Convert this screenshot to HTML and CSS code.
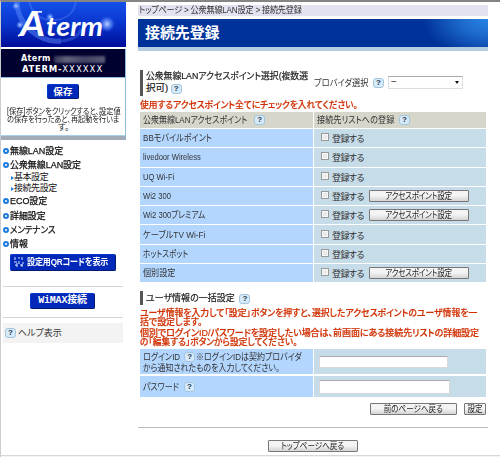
FILE: index.html
```
<!DOCTYPE html>
<html lang="ja">
<head>
<meta charset="utf-8">
<title>接続先登録</title>
<link rel="stylesheet" href="styles.css">
</head>
<body>
<div class="page">
  <aside class="side">
    <svg class="logo" viewBox="0 0 125 45">
      <defs>
        <linearGradient id="sky" x1="0" y1="0" x2="0" y2="1"><stop offset="0" stop-color="#1450ea"/><stop offset=".5" stop-color="#0834cc"/><stop offset="1" stop-color="#000c98"/></linearGradient>
        <radialGradient id="glow"><stop offset="0" stop-color="#b9d0ff"/><stop offset=".45" stop-color="#739bff" stop-opacity=".75"/><stop offset="1" stop-color="#5080ff" stop-opacity="0"/></radialGradient>
      </defs>
      <rect width="125" height="45" fill="url(#sky)"/>
      <g fill="none" stroke="#6794ff">
        <path d="M16-3C15 22 38 41 60 39" stroke-width="5" opacity=".45"/>
        <path d="M60 39C70 38 78 34 80 27" stroke-width="3" opacity=".3"/>
        <path d="M28-2C30 12 40 19 54 18S74 8 75-2" stroke-width="2" opacity=".3"/>
      </g>
      <circle cx="15" cy="4" r="4" fill="url(#glow)"/>
      <circle cx="19" cy="23" r="4" fill="url(#glow)"/>
      <circle cx="49" cy="15" r="4" fill="url(#glow)"/>
      <circle cx="106" cy="22" r="8" fill="url(#glow)"/>
      <g fill="#fff" class="logo-text">
        <text x="19" y="34" font-size="34" textLength="25" lengthAdjust="spacingAndGlyphs">A</text>
        <text x="45" y="34" font-size="26" textLength="57" lengthAdjust="spacingAndGlyphs">term</text>
      </g>
      <path d="M17 34L23 31M30 13Q35 9 41 10" fill="none" stroke="#fff" stroke-width="1.500"/>
    </svg>
    <div class="model">
      <div class="model-row"><span>Aterm</span><i class="masked"></i></div>
      <div class="model-id">ATERM-<b>XXXXXX</b></div>
    </div>
    <div class="save">
      <button class="blue save-btn">保存</button>
      <p class="note"><span class="n1">[保存]ボタンをクリックすると、設定値</span><span class="n2">の保存を行ったあと、再起動を行いま</span><span class="n3">す。</span></p>
    </div>
    <nav class="nav">
      <a class="main"><span>無線LAN設定</span></a>
      <a class="main"><span>公衆無線LAN設定</span></a>
      <a class="sub">基本設定</a>
      <a class="sub">接続先設定</a>
      <a class="main"><span>ECO設定</span></a>
      <a class="main"><span>詳細設定</span></a>
      <a class="main"><span class="n-e">メンテナンス</span></a>
      <a class="main"><span>情報</span></a>
    </nav>
    <button class="blue qr-btn"><svg class="qr" viewBox="0 0 10 10"><path d="M1 0v3M4 1h2M8 0v3M0 5h3M5 4v3M9 5v2M1 8h2M3 6v4M6 8h3M8 7v3" stroke="#d8e4ff" fill="none"/></svg><span>設定用QRコードを表示</span></button>
    <div class="wimax"><button class="blue wimax-btn">WiMAX接続</button></div>
    <div class="help-row"><i class="q">?</i><span>ヘルプ表示</span></div>
  </aside>
  <main class="main-col">
    <div class="crumb"><span>トップページ &gt; 公衆無線LAN設定 &gt; 接続先登録</span></div>
    <h1>接続先登録</h1>
    <div class="pick">
      <h2><span class="h-a">公衆無線LANアクセスポイント選択(複数選</span><br><span>択可)</span> <i class="q">?</i></h2>
      <span class="provider">プロバイダ選択</span><i class="q">?</i>
      <div class="select"><span>−</span><i class="arrow"></i></div>
    </div>
    <p class="warn w-a"><span>使用するアクセスポイント全てにチェックを入れてください。</span></p>
    <div class="grid">
      <div class="th"><span class="t-h">公衆無線LANアクセスポイント</span><i class="q">?</i></div><div class="th"><span class="t-h2">接続先リストへの登録</span><i class="q">?</i></div>
      <div class="td"><span class="t-bb">BBモバイルポイント</span></div><div class="tv"><i class="cb"></i><span>登録する</span></div>
      <div class="td"><span class="t-ld">livedoor Wireless</span></div><div class="tv"><i class="cb"></i><span>登録する</span></div>
      <div class="td"><span class="t-uq">UQ Wi-Fi</span></div><div class="tv"><i class="cb"></i><span>登録する</span></div>
      <div class="td"><span class="t-wi">Wi2 300</span></div><div class="tv"><i class="cb"></i><span>登録する</span><button class="gray ap"><b>アクセスポイント設定</b></button></div>
      <div class="td"><span class="t-wp">Wi2 300プレミアム</span></div><div class="tv"><i class="cb"></i><span>登録する</span><button class="gray ap"><b>アクセスポイント設定</b></button></div>
      <div class="td"><span class="t-tv">ケーブルTV Wi-Fi</span></div><div class="tv"><i class="cb"></i><span>登録する</span></div>
      <div class="td"><span class="t-hs">ホットスポット</span></div><div class="tv"><i class="cb"></i><span>登録する</span></div>
      <div class="td"><span class="t-ko">個別設定</span></div><div class="tv"><i class="cb"></i><span>登録する</span><button class="gray ap"><b>アクセスポイント設定</b></button></div>
    </div>
    <h2 class="user"><span>ユーザ情報の一括設定</span> <i class="q">?</i></h2>
    <p class="warn w-b"><span class="r1">ユーザ情報を入力して「設定」ボタンを押すと、選択したアクセスポイントのユーザ情報を一</span><br><span class="r2">括で設定します。</span></p>
    <p class="warn w-c"><span class="r3">個別でログインID/パスワードを設定したい場合は、前画面にある接続先リストの詳細設定</span><br><span class="r4">の「編集する」ボタンから設定してください。</span></p>
    <div class="grid login">
      <div class="td two"><div><span class="l1">ログインID</span><i class="q">?</i><span class="l2">※ログインIDは契約プロバイダ</span></div><div><span class="l3">から通知されたものを入力してください。</span></div></div><div class="tv"><input class="id-in"></div>
      <div class="td"><span class="l4">パスワード</span><i class="q">?</i></div><div class="tv"><input class="pw-in"></div>
    </div>
    <div class="actions"><button class="gray back"><b>前のページへ戻る</b></button><button class="gray set"><b>設定</b></button></div>
    <div class="foot"><button class="gray top"><b>トップページへ戻る</b></button></div>
  </main>
</div>
</body>
</html>
```
FILE: styles.css
```
*, *::before { box-sizing: border-box; }
body { margin: 0; background: #fff; color: #333; font: 10px/10px "Liberation Sans", "Noto Sans CJK JP", sans-serif; font-feature-settings: "palt"; }
p, h1, h2 { margin: 0; }
i { font-style: normal; }
button { font: inherit; padding: 0; margin: 0; white-space: nowrap; font-feature-settings: inherit; }
/* Condensed labels: each scales from its own left edge */
span { display: inline-block; white-space: nowrap; transform-origin: 0 50%; }
.page { height: 457px; border-top: 2px solid #858585; border-left: 1px solid #ccc; display: flex; background: linear-gradient(#d8d8d8, #d8d8d8) 0 453px / 100% 1px no-repeat, linear-gradient(#f4f4f4, #f4f4f4) 0 454px / 100% 1px no-repeat; }
.side { width: 126px; flex: none; }
.logo { display: block; width: 125px; height: 45px; }
.logo-text { font-family: Lato, "Liberation Sans", sans-serif; font-weight: bold; font-style: italic; }
.model { width: 125px; height: 29px; margin-top: 2px; padding-top: 5px; background: #01012f; color: #fff; border-right: 1px solid #8dbddc; border-bottom: 1px solid #8dbddc; font: bold 9px/10px "DejaVu Sans", "Liberation Sans", sans-serif; }
.model-row { display: flex; align-items: center; padding-left: 20px; letter-spacing: .4px; gap: 3px; font-size: 8px; }
.masked { width: 51px; height: 7px; background: linear-gradient(90deg, #35355a, #62627d 25%, #424264 60%, #5a5a77); filter: blur(1px); }
.model-id { padding-left: 21px; letter-spacing: .7px; font-size: 8.5px; }
.model-id b { font-weight: normal; letter-spacing: 1px; }
.save { width: 125px; height: 62px; padding-top: 6px; border-right: 1px solid #8dbddc; border-bottom: 4px solid #a2abb7; box-shadow: inset 0 -1px #a9d2ea; }
.blue { display: flex; align-items: center; justify-content: center; color: #fff; font-weight: bold; background: #0128b8; border: 1px solid #0238d0; border-right-color: #001b70; border-bottom-color: #001b70; border-radius: 2px; }
.save-btn { width: 32px; height: 15px; margin: 0 0 8px 46px; letter-spacing: .2px; font-size: 9.5px; }
.note { font-size: 8.5px; line-height: 8px; color: #222; padding-left: 6px; display: flex; flex-direction: column; align-items: flex-start; width: 119px; }
.n1 { transform: scaleX(.85); }
.n2 { transform: scaleX(.84); }
.n3 { margin-left: 51px; }
.nav { padding: 4px 0 0 2px; display: flex; flex-direction: column; color: #111; }
.main { font-size: 9.5px; height: 14.2px; line-height: 14px; display: flex; align-items: center; -webkit-text-stroke: .25px #111; }
.main span { transform: scaleX(.94); }
.main .n-e { transform: scaleX(.89); }
.main::before { content: ""; width: 6px; height: 6px; border: 2px solid #1d7be0; border-radius: 50%; margin-right: 1px; }
.sub { height: 11px; line-height: 11px; padding-left: 8px; font-size: 9px; letter-spacing: -.45px; display: flex; align-items: center; }
.sub::before { content: ""; border: 2px solid transparent; border-left: 3px solid #1d7be0; border-right: 0; margin-right: 0; }
.qr-btn { width: 106px; height: 17px; margin: 2.4px 0 0 9px; padding-left: 3px; justify-content: flex-start; gap: 3px; font-size: 9.5px; letter-spacing: -.2px; }
.qr-btn span { transform: scaleX(.85); }
.qr { width: 10px; height: 10px; flex: none; }
.wimax { margin: 15px 4px 0 2px; height: 32px; border-top: 1px solid #d5d5d5; border-bottom: 1px solid #d5d5d5; padding: 6px 0 0 27px; }
.wimax-btn { width: 65px; height: 16px; font: bold 10px/10px "Liberation Mono", "Noto Sans CJK JP", monospace; letter-spacing: -.2px; }
.help-row { margin: 5px 4px 0 2px; height: 20px; background: #f3f3f3; padding-left: 2px; display: flex; align-items: center; gap: 2px; font-size: 9px; }
.q { display: inline-flex; align-items: center; justify-content: center; flex: none; width: 11px; height: 10px; border: 1px solid #a5c5dc; border-radius: 3px; background: #d5eafa; color: #234; font: bold 8px/8px "Liberation Sans", sans-serif; }
.main-col { width: 350px; margin-left: 11px; }
.crumb { height: 11px; margin-top: 3px; padding-left: 1px; background: #e3e2f0; font-size: 9px; line-height: 11px; letter-spacing: -.25px; }
.crumb span { transform: scaleX(.906); }
h1 { height: 32px; margin-top: 3px; padding: 0 0 1px 7px; color: #fff; font-size: 15px; line-height: 27px; letter-spacing: -.1px; border-bottom: 4px solid #b4cee0; background: radial-gradient(ellipse 65px 38px at 100% 0, #2884e4, #1c68ca 45%, #003399) #039; }
.pick { display: flex; margin-top: 19px; height: 26px; padding-left: 2px; align-items: center; }
h2 { border-left: 3px solid #555; padding-left: 3px; font-size: 9.5px; line-height: 12px; font-weight: normal; color: #222; -webkit-text-stroke: .2px #222; width: 170px; flex: none; height: 26px; }
h2 .q { -webkit-text-stroke: 0; }
.h-a { transform: scaleX(.926); }
.provider { width: 59px; margin-left: 4px; font-size: 9px; transform: scaleX(.92); }
.select { width: 75px; height: 13px; margin: -2px 0 0 4px; padding: 0 3px 0 2px; border: 1px solid #dadde4; border-top-color: #aaa; display: flex; justify-content: space-between; align-items: center; }
.arrow { border: 2.5px solid transparent; border-top: 3px solid #111; border-bottom: 0; }
.warn { color: #d03000; font-size: 9.5px; line-height: 9px; font-weight: 500; padding-left: 2px; white-space: nowrap; -webkit-text-stroke: .2px #d03000; }
.warn span { vertical-align: top; }
.w-a { margin-top: 4px; height: 12px; }
.w-a span { transform: scaleX(.915); }
.r1 { transform: scaleX(.93); }
.r2 { transform: scaleX(.94); }
.r3 { transform: scaleX(.944); }
.r4 { transform: scaleX(.917); }
.grid { display: grid; grid-template-columns: 173px 172px; grid-template-rows: 16px repeat(8, 18.3px); gap: 1px; width: 346px; margin: 0 0 0 2px; font-size: 9.5px; }
.grid > div { display: flex; align-items: center; padding-left: 3px; }
.grid > .th { background: #d6d6ca; gap: 5px; }
.grid > .td { background: #b3d6ff; }
.grid > .tv { background: #c6dce9; padding-left: 7px; }
.t-h { transform: scaleX(.84); margin-right: -18px; }
.t-h2 { transform: scaleX(.86); margin-right: -13px; }
.t-bb, .t-ko { transform: scaleX(.85); }
.t-ld, .t-uq, .t-wi { transform: scaleX(.8); }
.t-wp { transform: scaleX(.81); }
.t-tv { transform: scaleX(.87); }
.t-hs { transform: scaleX(.8); }
.cb { width: 8px; height: 8px; margin: -2px 3px 0 0; border: 1px solid #999; background: #e9e9e9; box-shadow: inset 0 0 0 1px #f7f7f7; }
.tv > span { width: 37px; font-size: 9px; padding-top: 2px; letter-spacing: -.6px; }
.gray { display: flex; align-items: center; justify-content: center; height: 12px; border: 1px solid #777; border-radius: 1px; background: linear-gradient(#f4f4f4 45%, #d4d4d4); color: #222; font-size: 9px; }
.gray b { font-weight: normal; transform: scaleX(.84); }
.ap { width: 100px; letter-spacing: -.3px; }
.user { height: 14px; margin: 9px 0 0 2px; line-height: 13px; width: 200px; }
.user span { transform: scaleX(.947); margin-right: -3px; }
.w-b { margin-top: 3px; }
.w-c { margin-top: 2px; }
.login { grid-template-rows: 25px 21px; margin-top: 3px; gap: 2px 1px; }
.grid > .two { display: block; padding-top: 2px; }
.two > div { display: flex; align-items: center; height: 11px; }
.td .q { margin: 0 1px 0 4px; }
.l1 { transform: scaleX(.84); margin-right: -7px; }
.l2 { transform: scaleX(.84); }
.l3 { transform: scaleX(.835); }
.l4 { transform: scaleX(.84); margin-right: -6px; }
.tv input { border: 1px solid #d9d9d9; border-top-color: #aaa; background: #fff; padding: 0; margin-left: -2px; height: 12px; width: 129px; }
.tv .pw-in { width: 131px; height: 14px; }
.actions { display: flex; justify-content: flex-end; gap: 7px; margin: 6px 2px 0 0; }
.back { width: 87px; }
.set { width: 22px; }
.foot { margin-top: 12px; border-top: 1px solid #bbb; padding: 12px 0 0 130px; }
.top { width: 90px; }
```
